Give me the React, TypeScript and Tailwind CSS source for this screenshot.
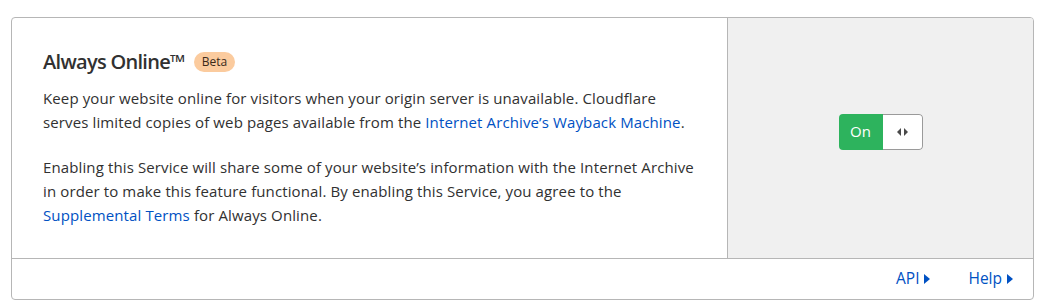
import React, { useState } from 'react';

const font = { fontFamily: '"Open Sans", "Noto Sans", sans-serif' };

function ArrowsIcon() {
  return (
    <svg width="11" height="8" viewBox="0 0 11 8" className="text-[#4a4a4a]">
      <path d="M4 0 L0 4 L4 8 Z" fill="currentColor" />
      <path d="M7 0 L11 4 L7 8 Z" fill="currentColor" />
    </svg>
  );
}

function Caret() {
  return (
    <svg width="6" height="10" viewBox="0 0 6 10" className="ml-[5px] text-[#0051c3]">
      <path d="M0 0 L6 5 L0 10 Z" fill="currentColor" />
    </svg>
  );
}

export default function App() {
  const [enabled, setEnabled] = useState(true);

  return (
    <div className="bg-white w-[1042px] h-[307px] pt-[17px] pl-[11px]" style={font}>
      <div className="w-[1023px] border border-[#b6b6b6] rounded-[4px] overflow-hidden">
        <div className="flex h-[241px] border-b border-[#b6b6b6]">
          {/* Description */}
          <div className="w-[716px] border-r border-[#b6b6b6] pl-[31px] pr-[10px] pt-[30px] text-[#313131]">
            <div className="flex items-center gap-[9px] h-[28px]">
              <h2 className="text-[20px] font-semibold tracking-[-0.7px]">Always Online™</h2>
              <span className="bg-[#fbcb9e] rounded-full px-[8px] h-[20px] flex items-center text-[12px] text-[#3a2a1a]">
                Beta
              </span>
            </div>
            <p className="mt-[10px] text-[15px] leading-[24px] tracking-[0.12px]">
              Keep your website online for visitors when your origin server is unavailable. Cloudflare
              <br />
              serves limited copies of web pages available from the{' '}
              <a className="text-[#0051c3]">Internet Archive’s Wayback Machine</a>.
            </p>
            <p className="mt-[21px] text-[15px] leading-[24px] tracking-[0.12px]">
              Enabling this Service will share some of your website’s information with the Internet Archive
              <br />
              in order to make this feature functional. By enabling this Service, you agree to the
              <br />
              <a className="text-[#0051c3]">Supplemental Terms</a> for Always Online.
            </p>
          </div>

          {/* Toggle */}
          <div className="flex-1 bg-[#f0f0f0] flex items-center justify-center pb-[13px]">
            <button
              onClick={() => setEnabled(!enabled)}
              className="flex h-[36px] rounded-[4px] overflow-hidden"
            >
              <span className="w-[44px] bg-[#2db35d] text-white text-[15px] flex items-center justify-center">
                {enabled ? 'On' : 'Off'}
              </span>
              <span className="w-[40px] bg-white border border-l-0 border-[#9a9a9a] rounded-r-[4px] flex items-center justify-center">
                <ArrowsIcon />
              </span>
            </button>
          </div>
        </div>

        {/* Footer */}
        <div className="h-[40px] flex items-center justify-end gap-[38px] pr-[20px] text-[15.5px] text-[#0051c3]">
          <a className="flex items-center">API<Caret /></a>
          <a className="flex items-center">Help<Caret /></a>
        </div>
      </div>
    </div>
  );
}
